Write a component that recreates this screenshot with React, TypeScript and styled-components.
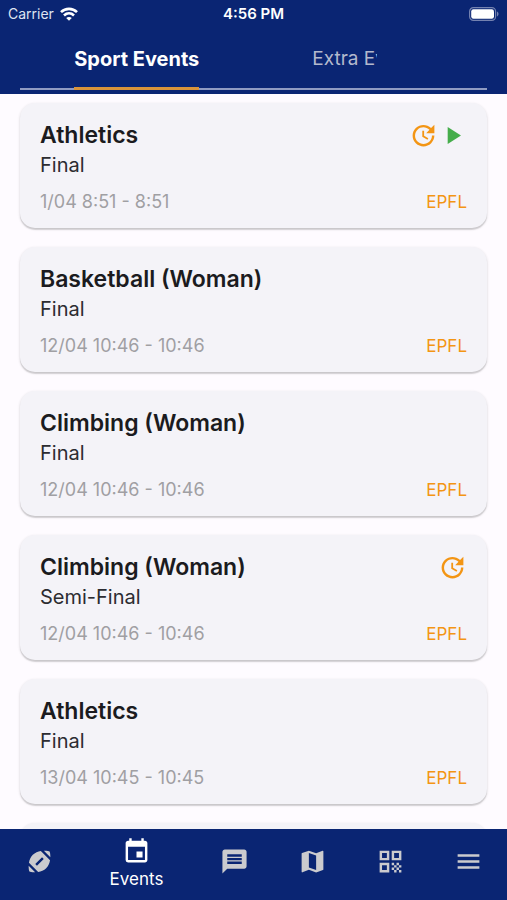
import React from "react";
import styled, { createGlobalStyle } from "styled-components";
import {
  MdEvent,
  MdMap,
  MdMenu,
  MdMessage,
  MdPlayArrow,
  MdQrCode,
  MdSportsFootball,
  MdUpdate,
} from "react-icons/md";

const navy = "#0a2573";
const orange = "#f39514";

const GlobalStyle = createGlobalStyle`
  * { box-sizing: border-box; }
  body {
    margin: 0;
    background: #fefbff;
    font-family: Inter, "Liberation Sans", sans-serif;
  }
  button { font: inherit; border: 0; padding: 0; background: none; cursor: pointer; }
`;

const Screen = styled.div`
  display: flex;
  flex-direction: column;
  height: 100vh;
  overflow: hidden;
`;

const Header = styled.header`
  flex: none;
  background: ${navy};
  color: #fff;
  padding-bottom: 4px;
`;

const StatusBar = styled.div`
  display: grid;
  grid-template-columns: 1fr auto 1fr;
  align-items: center;
  height: 28px;
  padding: 0 8px;
  font-size: 15px;
  line-height: 20px;
`;

const Carrier = styled.span`
  display: flex;
  align-items: center;
  gap: 6px;
  color: #dfe4f1;
  font-size: 14px;
`;

const Clock = styled.time`
  font-weight: 600;
`;

const BatteryIcon = styled.svg`
  justify-self: end;
`;

const TabList = styled.div`
  display: flex;
  height: 62px;
  margin: 0 20px;
  border-bottom: 2px solid #8f9bc2;
`;

const Tab = styled.button<{ $active?: boolean }>`
  flex: 1;
  display: flex;
  justify-content: center;
  height: 62px;
  color: ${(p) => (p.$active ? "#fff" : "#b3b9cd")};
  font-size: ${(p) => (p.$active ? 20 : 19)}px;
  font-weight: ${(p) => (p.$active ? 700 : 400)};
  line-height: 62px;
`;

const TabLabel = styled.span`
  height: 62px;
  border-bottom: 3px solid #d9943a;
`;

const ClippedLabel = styled.span`
  width: 116px;
  text-align: left;
`;

const Clip = styled.span`
  display: block;
  width: 65px;
  overflow: hidden;
  white-space: nowrap;
`;

const EventList = styled.main`
  flex: 1;
  min-height: 0;
  overflow: hidden;
  display: flex;
  flex-direction: column;
  gap: 19px;
  padding: 9px 20px 0;
`;

const Card = styled.article`
  flex: none;
  display: flex;
  flex-direction: column;
  padding: 17px 20px 14px;
  border-radius: 15px;
  background: #f4f3f8;
  box-shadow: 0 1px 3px rgba(0, 0, 0, 0.14), 0 2px 1px rgba(0, 0, 0, 0.12);
`;

const Row = styled.div`
  display: flex;
  align-items: center;
  justify-content: space-between;
`;

const Title = styled.h2`
  margin: 0;
  color: #1b1b20;
  font-size: 23px;
  font-weight: 600;
  line-height: 30px;
`;

const Marks = styled.span`
  display: flex;
  height: 30px;
  align-items: center;
`;

const Stage = styled.p`
  margin: 0 0 10px;
  color: #2c2c31;
  font-size: 20px;
  line-height: 30px;
`;

const Time = styled.span`
  color: #a09fa3;
  font-size: 18px;
  line-height: 24px;
`;

const Place = styled.span`
  color: ${orange};
  font-size: 17px;
  line-height: 24px;
`;

const BottomBar = styled.nav`
  flex: none;
  display: flex;
  height: 71px;
  background: ${navy};
`;

const NavButton = styled.button<{ $active?: boolean }>`
  flex: ${(p) => (p.$active ? 3 : 2)} 1 0;
  min-width: 0;
  display: flex;
  flex-direction: column;
  align-items: center;
  justify-content: center;
  padding-bottom: ${(p) => (p.$active ? 0 : 6)}px;
  color: ${(p) => (p.$active ? "#fff" : "#cbcbce")};
  font-size: 17px;
  line-height: 26px;
`;

type EventItem = {
  title: string;
  stage: string;
  time: string;
  updated?: boolean;
  live?: boolean;
};

const events: EventItem[] = [
  { title: "Athletics", stage: "Final", time: "1/04 8:51 - 8:51", updated: true, live: true },
  { title: "Basketball (Woman)", stage: "Final", time: "12/04 10:46 - 10:46" },
  { title: "Climbing (Woman)", stage: "Final", time: "12/04 10:46 - 10:46" },
  { title: "Climbing (Woman)", stage: "Semi-Final", time: "12/04 10:46 - 10:46", updated: true },
  { title: "Athletics", stage: "Final", time: "13/04 10:45 - 10:45" },
];

const EmptyCard = styled(Card)`
  height: 125px;
`;

const Wifi = () => (
  <svg width="18" height="14" viewBox="0 0 18 14" aria-label="Wi-Fi" fill="none" stroke="#fff" strokeWidth="2.6">
    <path d="M1 5.2C5.5.7 12.5.7 17 5.2" />
    <path d="M4 8.5c2.900-2.800 7.100-2.800 10 0" />
    <path d="M9 13.800 6.200 11c1.600-1.500 4-1.500 5.600 0z" fill="#fff" stroke="none" />
  </svg>
);

const Battery = () => (
  <BatteryIcon width="30" height="14" viewBox="0 0 30 14" aria-label="Battery full">
    <rect x="0.600" y="0.600" width="26" height="12.800" rx="3.800" fill="none" stroke="#7482b0" strokeWidth="1.200" />
    <rect x="2.200" y="2.200" width="22.800" height="9.600" rx="2.200" fill="#fff" />
    <path d="M28 4.600c2 .7 2 4.100 0 4.800z" fill="#7482b0" />
  </BatteryIcon>
);

export default function App() {
  return (
    <Screen>
      <GlobalStyle />
      <Header>
        <StatusBar>
          <Carrier>
            Carrier <Wifi />
          </Carrier>
          <Clock>4:56 PM</Clock>
          <Battery />
        </StatusBar>
        <TabList role="tablist">
          <Tab role="tab" aria-selected="true" $active>
            <TabLabel>Sport Events</TabLabel>
          </Tab>
          <Tab role="tab" aria-selected="false">
            <ClippedLabel>
              <Clip>Extra Ev</Clip>
            </ClippedLabel>
          </Tab>
        </TabList>
      </Header>
      <EventList>
        {events.map((e, i) => (
          <Card key={i}>
            <Row>
              <Title>{e.title}</Title>
              <Marks>
                {e.updated && <MdUpdate size={29} color={orange} aria-label="Updated" />}
                {e.live && <MdPlayArrow size={29} color="#45ad4b" aria-label="Live" />}
              </Marks>
            </Row>
            <Stage>{e.stage}</Stage>
            <Row>
              <Time>{e.time}</Time>
              <Place>EPFL</Place>
            </Row>
          </Card>
        ))}
        <EmptyCard />
      </EventList>
      <BottomBar>
        <NavButton aria-label="Sports">
          <MdSportsFootball size={29} />
        </NavButton>
        <NavButton $active>
          <MdEvent size={29} />
          Events
        </NavButton>
        <NavButton aria-label="Messages">
          <MdMessage size={29} />
        </NavButton>
        <NavButton aria-label="Map">
          <MdMap size={29} />
        </NavButton>
        <NavButton aria-label="QR code">
          <MdQrCode size={29} />
        </NavButton>
        <NavButton aria-label="Menu">
          <MdMenu size={29} />
        </NavButton>
      </BottomBar>
    </Screen>
  );
}
